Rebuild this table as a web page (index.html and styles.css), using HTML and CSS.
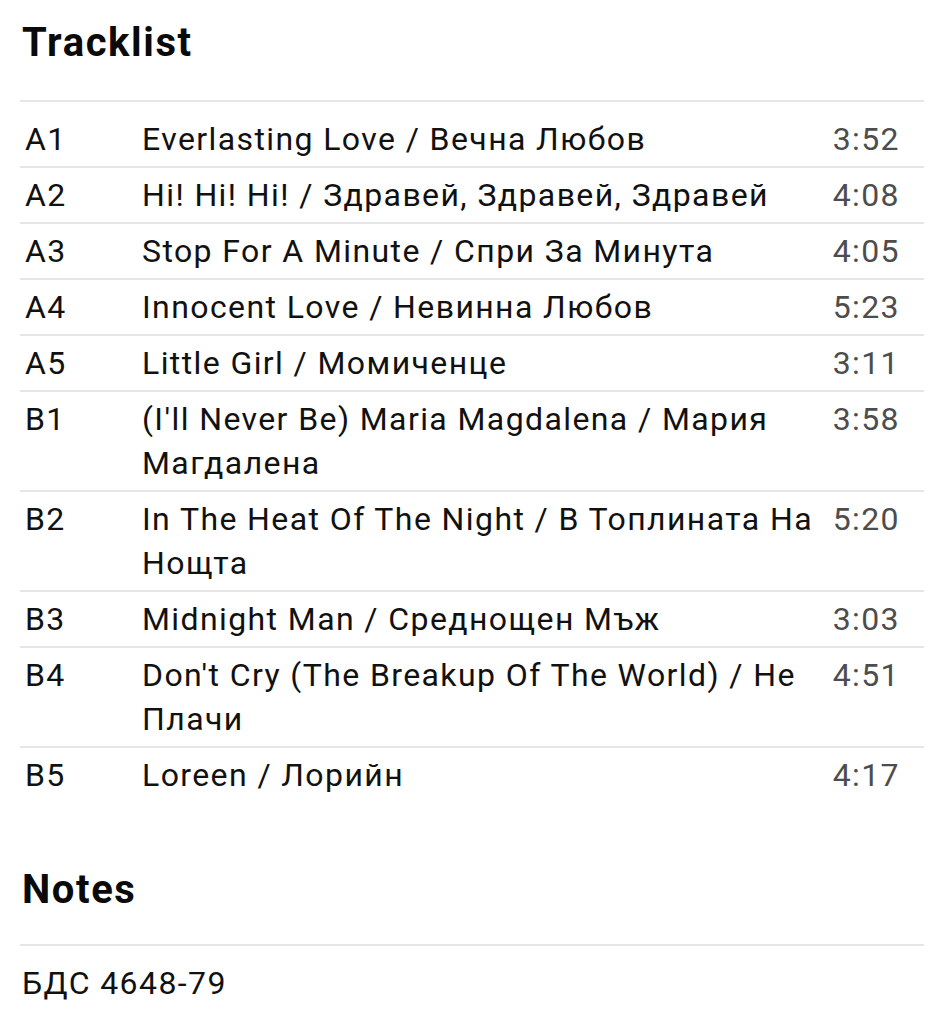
FILE: index.html
```html
<!DOCTYPE html>
<html lang="bg">
<head>
<meta charset="utf-8">
<title>Tracklist</title>
<link rel="stylesheet" href="styles.css">
</head>
<body>
<section class="block">
  <h2 class="block-title">Tracklist</h2>
  <div class="tracks">
    <div class="track"><span class="pos">A1</span><span class="name">Everlasting Love / Вечна Любов</span><span class="dur">3:52</span></div>
    <div class="track"><span class="pos">A2</span><span class="name">Hi! Hi! Hi! / Здравей, Здравей, Здравей</span><span class="dur">4:08</span></div>
    <div class="track"><span class="pos">A3</span><span class="name">Stop For A Minute / Спри За Минута</span><span class="dur">4:05</span></div>
    <div class="track"><span class="pos">A4</span><span class="name">Innocent Love / Невинна Любов</span><span class="dur">5:23</span></div>
    <div class="track"><span class="pos">A5</span><span class="name">Little Girl / Момиченце</span><span class="dur">3:11</span></div>
    <div class="track"><span class="pos">B1</span><span class="name">(I'll Never Be) Maria Magdalena / Мария Магдалена</span><span class="dur">3:58</span></div>
    <div class="track"><span class="pos">B2</span><span class="name">In The Heat Of The Night / В Топлината На Нощта</span><span class="dur">5:20</span></div>
    <div class="track"><span class="pos">B3</span><span class="name">Midnight Man / Среднощен Мъж</span><span class="dur">3:03</span></div>
    <div class="track"><span class="pos">B4</span><span class="name">Don't Cry (The Breakup Of The World) / Не Плачи</span><span class="dur">4:51</span></div>
    <div class="track last"><span class="pos">B5</span><span class="name">Loreen / Лорийн</span><span class="dur">4:17</span></div>
  </div>
</section>
<section class="block notes">
  <h2 class="block-title">Notes</h2>
  <p class="note-text">БДС 4648-79</p>
</section>
</body>
</html>
```

FILE: styles.css
```css
html, body {
  margin: 0;
  padding: 0;
  background: #ffffff;
}

body {
  font-family: Roboto, "Noto Sans", sans-serif;
  color: #111111;
  padding: 18px 20px 0 20px;
}

.block-title {
  margin: 0;
  font-size: 40px;
  font-weight: 700;
  letter-spacing: 1.6px;
  line-height: 50px;
  padding: 0 0 32px 2px;
  border-bottom: 2px solid #e6e6e6;
  color: #0a0a0a;
}

.tracks {
  margin-top: 10px;
}

.track {
  display: grid;
  grid-template-columns: 122px 1fr 94px;
  font-size: 32px;
  letter-spacing: 1.4px;
  line-height: 44px;
  padding: 5px 0;
  border-bottom: 2px solid #e6e6e6;
}

.track.last {
  border-bottom: none;
}

.pos {
  padding-left: 5px;
  color: #111111;
}

.name {
  padding-right: 10px;
  color: #111111;
}

.dur {
  text-align: right;
  padding-right: 24px;
  color: #4d4d4d;
}

.notes {
  margin-top: 63px;
}

.notes .block-title {
  padding-bottom: 29px;
}

.note-text {
  margin: 10px 0 0 0;
  padding: 5px 0 5px 2px;
  font-size: 32px;
  letter-spacing: 1.4px;
  line-height: 44px;
  color: #111111;
}
```
